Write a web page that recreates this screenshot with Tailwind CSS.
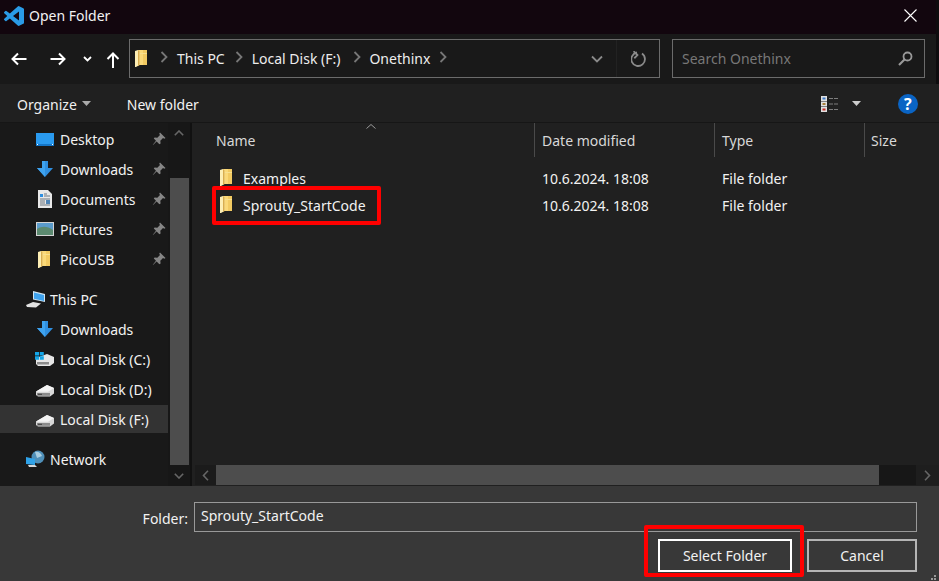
<!DOCTYPE html>
<html><head><meta charset="utf-8"><title>Open Folder</title>
<script src="https://cdn.jsdelivr.net/npm/@tailwindcss/browser@4"></script>
</head>
<body class="bg-[#191919] overflow-hidden">
<svg class="hidden">
<symbol id="folder" viewBox="0 0 12 17"><path d="M3 0h9v15H3z" fill="#fbd978"/><path d="M8 0h4v15H8z" fill="#f2ca62"/><path d="M3 3.500h9" stroke="#f8e08f" stroke-width="1"/><path d="M0 1 3 0l1.500 1v14L1 17H0z" fill="#fdeeb4"/><path d="M3 0l1.500 1v14L3 16z" fill="#d8ad4f"/></symbol>
<symbol id="pin" viewBox="0 0 14 14"><path d="M8 0.500 13.500 6 12.300 6.800 11 6 8.300 8.700 8.600 11.400 7.400 12.200 4.600 9.400 1 13 .8 12.800 4 8.800 1.800 6.600 2.600 5.500 5.300 5.700 8 3 7.200 1.700z" fill="#868686"/></symbol>
<symbol id="dl" viewBox="0 0 16 16"><path d="M5 0h6v7h5l-8 9-8-9h5z" fill="#2f8fe0"/><path d="M5 0h3v16l-8-9h5z" fill="#3fa3ef"/></symbol>
<symbol id="disk" viewBox="0 0 18 12"><path d="M0 6.500 11 0l7 3v5.500L14 11.500H2L0 10z" fill="#d8d8d8"/><path d="M0 6.500 11 0l7 3-6 3.800H2z" fill="#f4f4f4"/><path d="M1 8h13v2.800H1z" fill="#8b8b8b"/><path d="M2 8.800h4v1H2z" fill="#3a3a3a"/></symbol>
<symbol id="chev" viewBox="0 0 8 12"><path d="M1.500 1 6.500 6l-5 5" fill="none" stroke="#777" stroke-width="1.800"/></symbol>
</svg>
<div class="relative w-[939px] h-[581px] overflow-hidden flex flex-col font-['Noto_Sans','Open_Sans',sans-serif] text-[14px] text-[#f2f2f2]">
  <!-- title -->
  <div class="h-[34px] shrink-0 bg-[#12060e] flex items-center">
    <svg class="w-[20px] h-[20px] ml-[4px] mt-[-2px]" viewBox="0 0 24 24"><path fill="#2a9be6" d="M23.150 2.587L18.210.21a1.494 1.494 0 0 0-1.705.29l-9.460 8.630-4.120-3.128a.999.999 0 0 0-1.276.057L.327 7.261A1 1 0 0 0 .326 8.740L3.899 12 .326 15.260a1 1 0 0 0 .001 1.479L1.650 17.940a.999.999 0 0 0 1.276.057l4.120-3.128 9.460 8.630a1.492 1.492 0 0 0 1.704.29l4.942-2.377A1.500 1.500 0 0 0 24 20.060V3.939a1.500 1.500 0 0 0-.85-1.352zm-5.146 14.861L10.826 12l7.178-5.448v10.896z"/></svg>
    <span class="ml-[5px] mt-[-4px]">Open Folder</span>
    <svg class="ml-auto mr-[22px] w-[13px] h-[13px] mt-[-4px]" viewBox="0 0 13 13"><path d="M.5.5l12 12M12.500.5l-12 12" stroke="#fff" stroke-width="1.100"/></svg>
  </div>
  <!-- nav -->
  <div class="h-[50px] shrink-0 bg-[#191919] flex items-center">
    <svg class="ml-[11px] w-[16px] h-[14px] mt-[-1px]" viewBox="0 0 16 14"><path d="M15.500 7H1.500M7 1.500 1.500 7 7 12.500" fill="none" stroke="#fff" stroke-width="2"/></svg>
    <svg class="ml-[23px] w-[16px] h-[14px] mt-[-1px]" viewBox="0 0 16 14"><path d="M.5 7h14M9 1.500 14.500 7 9 12.500" fill="none" stroke="#fff" stroke-width="2"/></svg>
    <svg class="ml-[17px] w-[9px] h-[6px]" viewBox="0 0 9 6"><path d="M1 1l3.500 3.500L8 1" fill="none" stroke="#fff" stroke-width="1.800"/></svg>
    <svg class="ml-[14px] w-[14px] h-[16px] mt-[2px]" viewBox="0 0 14 16"><path d="M7 16V1.500M1.500 7 7 1.500 12.500 7" fill="none" stroke="#fff" stroke-width="2"/></svg>
    <div class="ml-[9px] w-[531px] h-[39px] border border-[#6b6b6b] flex items-center text-[#ededed] mt-[-1px]">
      <svg class="ml-[5px] w-[12px] h-[17px]"><use href="#folder"/></svg>
      <svg class="ml-[13px] w-[8px] h-[12px] mt-[-3px]"><use href="#chev"/></svg>
      <span class="ml-[9px]">This PC</span>
      <svg class="ml-[10px] w-[8px] h-[12px] mt-[-3px]"><use href="#chev"/></svg>
      <span class="ml-[9px]">Local Disk (F:)</span>
      <svg class="ml-[13px] w-[8px] h-[12px] mt-[-3px]"><use href="#chev"/></svg>
      <span class="ml-[8px]">Onethinx</span>
      <svg class="ml-[9px] w-[8px] h-[12px] mt-[-3px]"><use href="#chev"/></svg>
      <svg class="ml-auto mr-[13px] w-[12px] h-[8px]" viewBox="0 0 12 8"><path d="M1 1.500 6 6.500 11 1.500" fill="none" stroke="#8a8a8a" stroke-width="1.800"/></svg>
      <div class="h-full w-px bg-[#222]"></div>
      <svg class="ml-[14px] mr-[12px] w-[16px] h-[16px]" viewBox="0 0 16 16"><path d="M6 1.500A6.800 6.800 0 1 0 11 2.600" fill="none" stroke="#8a8a8a" stroke-width="1.800"/><path d="M5 0v5.500H.5" fill="none" stroke="#8a8a8a" stroke-width="1.800" transform="rotate(-45 4 3)"/></svg>
    </div>
    <div class="ml-[12px] w-[253px] h-[39px] border border-[#6b6b6b] flex items-center text-[#777] pl-[9px] mt-[-1px]">
      <span>Search Onethinx</span>
      <svg class="ml-auto mr-[11px] w-[15px] h-[15px]" viewBox="0 0 15 15"><circle cx="9.500" cy="5.500" r="4" fill="none" stroke="#999" stroke-width="1.800"/><path d="M6.500 8.500 1 14" stroke="#999" stroke-width="2.200"/></svg>
    </div>
  </div>
  <!-- toolbar -->
  <div class="h-[39px] shrink-0 bg-[#202020] border-b border-[#161616] flex items-center">
    <span class="ml-[17px] mt-[2px] text-[#efefef]">Organize</span>
    <svg class="ml-[5px] w-[9px] h-[5px]" viewBox="0 0 9 5"><path d="M0 0h9L4.500 5z" fill="#aaa"/></svg>
    <span class="ml-[36px] mt-[2px]">New folder</span>
    <svg class="ml-[622px] w-[18px] h-[16px] mt-[2px]" viewBox="0 0 18 16"><path d="M0 0h6v5H0zM0 5.500h6v5H0zM0 11h6v5H0z" fill="#e0e0e0"/><path d="M1.500 1.500h3v2h-3z" fill="#3b78c8"/><path d="M1.500 7h3v2h-3z" fill="#a8803a"/><path d="M1.500 12.500h3v2h-3z" fill="#c42a22"/><path d="M8 2.500h10M8 8h10M8 13.500h10" stroke="#7d7d7d" stroke-dasharray="4 1"/></svg>
    <svg class="ml-[13px] w-[9px] h-[5px] mt-[1px]" viewBox="0 0 9 5"><path d="M0 0h9L4.500 5z" fill="#ccc"/></svg>
    <div class="ml-[37px] w-[20px] h-[20px] mt-[1px] rounded-full bg-[#0a64c4] flex items-center justify-center text-white font-bold text-[16px] leading-none">?</div>
  </div>
  <!-- body -->
  <div class="flex-1 flex min-h-0">
    <div class="w-[190px] shrink-0 flex bg-[#191919]">
      <div class="w-[168px] pt-[1px] flex flex-col">
        <div class="h-[30px] flex items-center pl-[36px]">
          <svg class="w-[18px] h-[13px]" viewBox="0 0 18 13"><path d="M0 0h18v13H0z" fill="#2a9bf0"/><path d="M0 11h18v2H0z" fill="#1476c8"/><path d="M1 11.500h1M16 11.500h1" stroke="#fff"/></svg>
          <span class="ml-[6px]">Desktop</span><svg class="ml-auto mr-[2px] w-[14px] h-[14px]"><use href="#pin"/></svg></div>
        <div class="h-[30px] flex items-center pl-[37px]">
          <svg class="w-[16px] h-[16px]"><use href="#dl"/></svg>
          <span class="ml-[7px]">Downloads</span><svg class="ml-auto mr-[2px] w-[14px] h-[14px]"><use href="#pin"/></svg></div>
        <div class="h-[30px] flex items-center pl-[38px]">
          <svg class="w-[14px] h-[18px]" viewBox="0 0 14 18"><path d="M0 0h10l4 4v14H0z" fill="#e8e8e8"/><path d="M2 4h3v3H2z" fill="#2f8fe0"/><path d="M6 4h3M6 6h6M2 9h10M2 11h5M2 13h5M2 15h10" stroke="#6d7780"/><path d="M8 10h4v4H8z" fill="#4f84b5"/></svg>
          <span class="ml-[8px]">Documents</span><svg class="ml-auto mr-[2px] w-[14px] h-[14px]"><use href="#pin"/></svg></div>
        <div class="h-[30px] flex items-center pl-[36px]">
          <svg class="w-[18px] h-[14px]" viewBox="0 0 18 14"><path d="M0 0h18v14H0z" fill="#d4d4d4"/><path d="M1 1h16v12H1z" fill="#5a9bcb"/><path d="M1 7c5-3 10-3 16 1v5H1z" fill="#5c8a70"/></svg>
          <span class="ml-[6px]">Pictures</span><svg class="ml-auto mr-[2px] w-[14px] h-[14px]"><use href="#pin"/></svg></div>
        <div class="h-[30px] flex items-center pl-[38px]">
          <svg class="w-[12px] h-[17px]"><use href="#folder"/></svg>
          <span class="ml-[10px]">PicoUSB</span><svg class="ml-auto mr-[2px] w-[14px] h-[14px]"><use href="#pin"/></svg></div>
        <div class="h-[30px] mt-[10px] flex items-center pl-[26px]">
          <svg class="w-[19px] h-[17px]" viewBox="0 0 19 17"><path d="M7 0l12 3v8L7 8.500z" fill="#cfe4f2"/><path d="M8 1.500l10 2.500v6L8 7.800z" fill="#3fa3ef"/><path d="M0 14l7-3 8 1.500-5 4-9-.5z" fill="#e2e2e2"/></svg>
          <span class="ml-[5px]">This PC</span></div>
        <div class="h-[30px] flex items-center pl-[37px]">
          <svg class="w-[16px] h-[16px]"><use href="#dl"/></svg>
          <span class="ml-[7px]">Downloads</span></div>
        <div class="h-[30px] flex items-center pl-[35px]">
          <svg class="w-[19px] h-[15px]" viewBox="0 0 19 15"><path d="M1 6 12 2l7 3v6l-4 3H3L1 12z" fill="#e6e6e6"/><path d="M2 10h12v2.500H2z" fill="#8b8b8b"/><path d="M0 0h4v3.500H0zM4.800 0h4v3.500h-4zM0 4.300h4v3.500H0zM4.800 4.300h4v3.500h-4z" fill="#12a5e8"/></svg>
          <span class="ml-[6px]">Local Disk (C:)</span></div>
        <div class="h-[30px] flex items-center pl-[36px]">
          <svg class="w-[18px] h-[12px] mt-[4px]"><use href="#disk"/></svg>
          <span class="ml-[6px]">Local Disk (D:)</span></div>
        <div class="h-[28px] my-[1px] flex items-center pl-[36px] bg-[#333333]">
          <svg class="w-[18px] h-[12px] mt-[4px]"><use href="#disk"/></svg>
          <span class="ml-[6px]">Local Disk (F:)</span></div>
        <div class="h-[30px] mt-[10px] flex items-center pl-[26px]">
          <svg class="w-[19px] h-[18px]" viewBox="0 0 19 18"><circle cx="12" cy="7" r="6.500" fill="#4f8fb8"/><path d="M9 2c3-1 6 1 7 4l-5 2z" fill="#a9cde0"/><path d="M0 7l9 2v6l-9-1z" fill="#2fa2e8"/><path d="M2 15h7l2 2H3z" fill="#d8d8d8"/></svg>
          <span class="ml-[5px]">Network</span></div>
      </div>
      <div class="w-[22px] flex flex-col bg-[#171717]">
        <div class="h-[20px] flex items-center justify-center"><svg class="w-[10px] h-[6px]" viewBox="0 0 10 6"><path d="M.8 5.200 5 1l4.200 4.200" fill="none" stroke="#666" stroke-width="1.600"/></svg></div>
        <div class="ml-[2px] w-[19px] flex-1 mt-[35px] bg-[#4d4d4d]"></div>
        <div class="h-[21px] flex items-center justify-center"><svg class="w-[10px] h-[6px]" viewBox="0 0 10 6"><path d="M.8.8 5 5l4.200-4.200" fill="none" stroke="#666" stroke-width="1.600"/></svg></div>
      </div>
    </div>
    <div class="w-[2px] bg-[#111]"></div>
    <div class="flex-1 min-w-0 flex flex-col bg-[#202020]">
      <div class="h-[34px] flex shrink-0 text-[#d8d8d8]">
        <div class="relative w-[343px] pl-[24px] flex items-center border-r border-[#4a4a4a]">Name
          <svg class="absolute left-[174px] top-[1px] w-[10px] h-[5px]" viewBox="0 0 10 5"><path d="M.5 4.500 5 .5l4.500 4" fill="none" stroke="#999"/></svg></div>
        <div class="w-[180px] pl-[7px] flex items-center border-r border-[#4a4a4a]">Date modified</div>
        <div class="w-[150px] pl-[7px] flex items-center border-r border-[#4a4a4a]">Type</div>
        <div class="pl-[6px] flex items-center">Size</div>
      </div>
      <div class="h-[27px] mt-[8px] flex items-center">
        <svg class="ml-[28px] w-[12px] h-[17px] mt-[-3px]"><use href="#folder"/></svg>
        <span class="ml-[11px] w-[299px]">Examples</span><span class="w-[180px]">10.6.2024. 18:08</span><span>File folder</span></div>
      <div class="h-[27px] flex items-center">
        <svg class="ml-[28px] w-[12px] h-[17px] mt-[-3px]"><use href="#folder"/></svg>
        <span class="ml-[11px] w-[299px]">Sprouty_StartCode</span><span class="w-[180px]">10.6.2024. 18:08</span><span>File folder</span></div>
      <div class="flex-1"></div>
      <div class="h-[20px] mb-[1px] flex shrink-0 ml-[3px]">
        <div class="w-[21px] bg-[#1b1b1b] flex items-center justify-center"><svg class="w-[7px] h-[11px]" viewBox="0 0 7 11"><path d="M6 .8 1.500 5.500 6 10.200" fill="none" stroke="#666" stroke-width="1.600"/></svg></div>
        <div class="w-[663px] bg-[#4d4d4d]"></div>
        <div class="w-[37px] bg-[#171717]"></div>
        <div class="flex-1 bg-[#1e1e1e] flex items-center justify-center"><svg class="w-[7px] h-[11px]" viewBox="0 0 7 11"><path d="M1 .8 5.500 5.500 1 10.200" fill="none" stroke="#666" stroke-width="1.600"/></svg></div>
      </div>
    </div>
  </div>
  <!-- bottom -->
  <div class="h-[95px] shrink-0 bg-[#383838] pt-[16px] pr-[22px] flex flex-col items-end">
    <div class="flex items-center">
      <span class="mr-[6px] mt-[2px]">Folder:</span>
      <div class="w-[723px] h-[30px] border border-[#999] flex items-center pl-[6px] pb-[3px]">Sprouty_StartCode</div>
    </div>
    <div class="flex mt-[7px] gap-[15px]">
      <div class="w-[134px] h-[33px] border-2 border-white flex items-center justify-center">Select Folder</div>
      <div class="w-[110px] h-[33px] border-2 border-[#b5b5b5] flex items-center justify-center">Cancel</div>
    </div>
  </div>
  <!-- annotations -->
  <div class="absolute left-[936px] top-0 w-[3px] h-[84px] bg-[#0e0c0e]"></div>
  <div class="absolute left-[212px] top-[186px] w-[169px] h-[39px] border-[4px] border-[#ff0000] rounded-[2px]"></div>
  <div class="absolute left-[644px] top-[525px] w-[160px] h-[52px] border-[4px] border-[#ff0000] rounded-[2px]"></div>
  <svg class="absolute left-[928px] top-[574px] w-[11px] h-[7px]" viewBox="0 0 11 7"><path d="M3 4h2v2H3zM6 1h2v2H6zM6 4h2v2H6z" fill="#999"/></svg>
</div>
</body></html>
